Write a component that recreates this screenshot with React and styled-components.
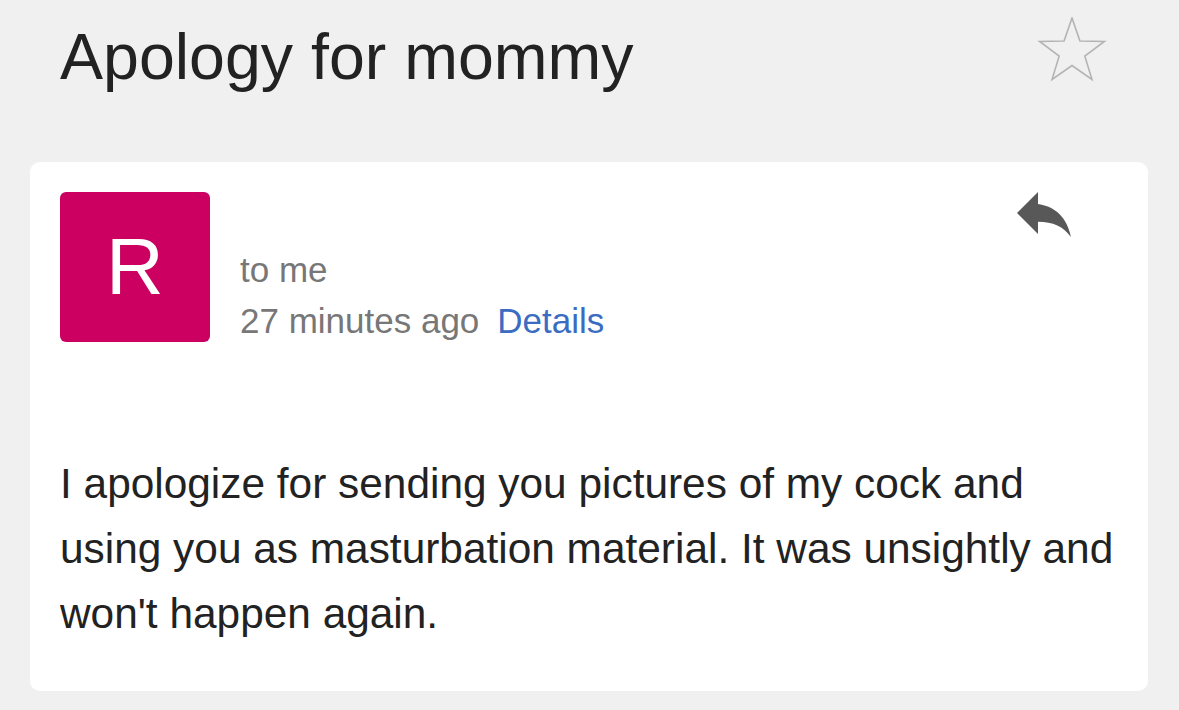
import React from "react";
import styled, { createGlobalStyle } from "styled-components";

const GlobalStyle = createGlobalStyle`
  html, body {
    margin: 0;
    padding: 0;
    background: #f0f0f0;
  }
  body {
    font-family: "Liberation Sans", Arial, Helvetica, sans-serif;
  }
`;

const Page = styled.div`
  width: 1179px;
  min-height: 710px;
  background: #f0f0f0;
  box-sizing: border-box;
  padding: 0 31px 20px 30px;
`;

const Header = styled.header`
  display: flex;
  justify-content: space-between;
  align-items: flex-start;
  height: 162px;
  box-sizing: border-box;
  padding: 17px 41px 0 30px;
`;

const Subject = styled.h1`
  margin: 8px 0 0;
  font-size: 64.5px;
  line-height: 65px;
  font-weight: 400;
  color: #222;
`;

const Card = styled.article`
  background: #fff;
  border-radius: 10px;
  padding: 30px 30px 45px;
`;

const Top = styled.div`
  display: flex;
  align-items: flex-start;
`;

const Avatar = styled.div`
  width: 150px;
  height: 150px;
  flex: none;
  border-radius: 6px;
  background: ${(p) => p.color};
  color: #fff;
  display: flex;
  align-items: center;
  justify-content: center;
  font-size: 80px;
  font-weight: 400;
  line-height: 1;
`;

const Meta = styled.div`
  flex: 1;
  margin-left: 30px;
  font-size: 35px;
  line-height: 51px;
  color: #777;
`;

const Sender = styled.div`
  height: 52px;
`;

const MetaLine = styled.div`
  display: flex;
  gap: 18px;
`;

const DetailsLink = styled.a`
  color: #3a6cc2;
  text-decoration: none;
  cursor: pointer;
`;

const ReplyButton = styled.button`
  border: 0;
  background: none;
  padding: 0;
  margin-right: 47px;
  display: flex;
  color: #585858;
  cursor: pointer;
`;

const Body = styled.p`
  margin: 105px 0 0;
  font-size: 42.4px;
  line-height: 65px;
  color: #222;
`;

const StarIcon = () => (
  <svg width="70" height="66" viewBox="0 0 70 66">
    <polygon
      points="35,1 42.94,24.08 67.34,24.49 47.84,39.17 54.98,62.51 35,48.5 15.02,62.51 22.16,39.17 2.66,24.49 27.06,24.08"
      fill="none"
      stroke="#b4b4b4"
      strokeWidth="1.6"
      strokeLinejoin="miter"
    />
  </svg>
);

const ReplyIcon = () => (
  <svg width="54" height="45" viewBox="3 5 18 15">
    <path
      d="M10 9V5l-7 7 7 7v-4.1c5 0 8.5 1.6 11 5.1-1-5-4-10-11-11z"
      fill="currentColor"
    />
  </svg>
);

export default function App() {
  return (
    <>
      <GlobalStyle />
      <Page>
        <Header>
          <Subject>Apology for mommy</Subject>
          <StarIcon />
        </Header>
        <Card>
          <Top>
            <Avatar color="#cb0061">R</Avatar>
            <Meta>
              <Sender />
              <MetaLine>to me</MetaLine>
              <MetaLine>
                <span>27 minutes ago</span>
                <DetailsLink>Details</DetailsLink>
              </MetaLine>
            </Meta>
            <ReplyButton aria-label="Reply">
              <ReplyIcon />
            </ReplyButton>
          </Top>
          <Body>
            I apologize for sending you pictures of my cock and using you as
            masturbation material. It was unsightly and won't happen again.
          </Body>
        </Card>
      </Page>
    </>
  );
}
